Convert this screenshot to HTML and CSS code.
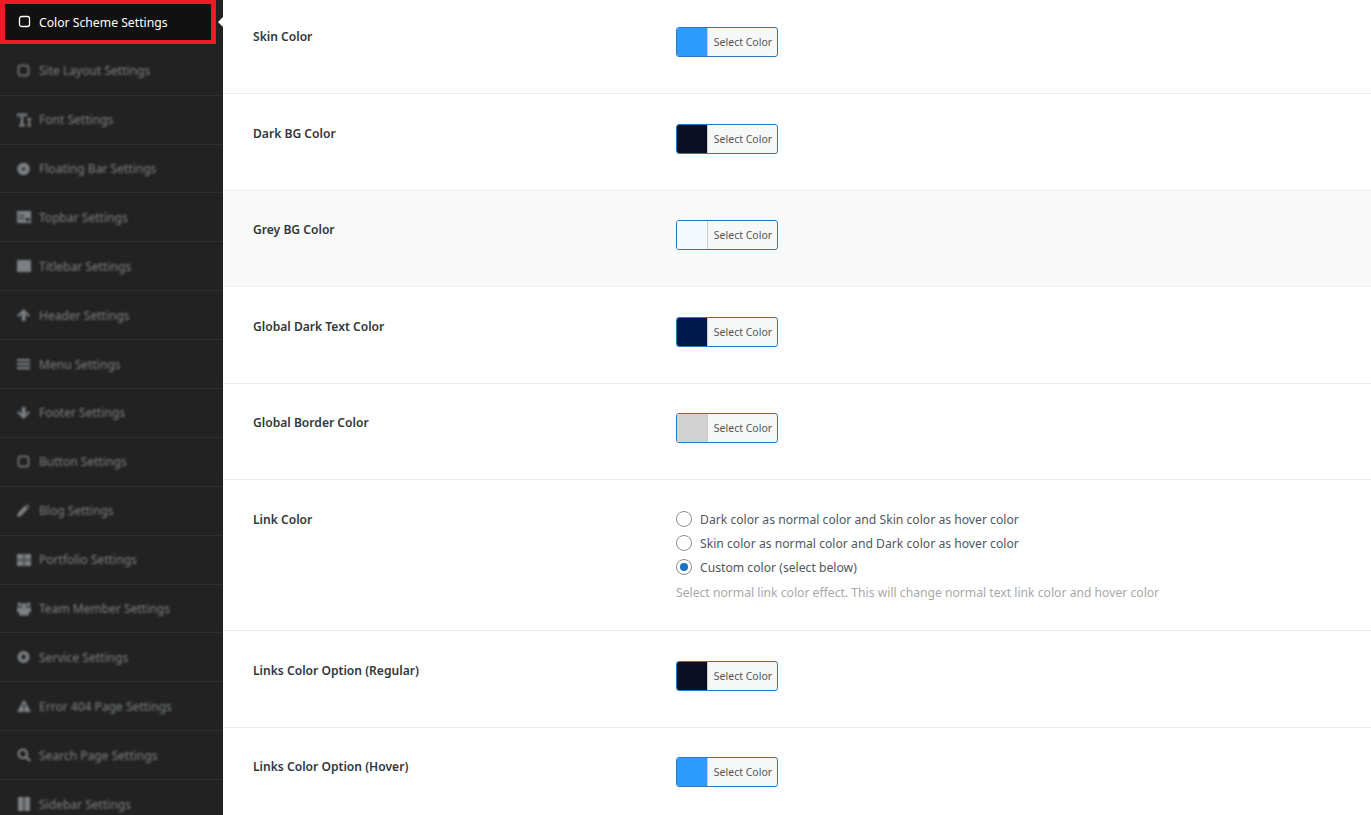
FILE: index.html
```html
<!DOCTYPE html>
<html lang="en">
<head>
<meta charset="utf-8">
<title>Color Scheme Settings</title>
<link rel="stylesheet" href="styles.css">
</head>
<body>
<div class="page">
<nav class="side">
  <a class="item active"><span class="inner"><svg class="ico" viewBox="0 0 14 14"><rect x="1.500" y="1.500" width="10" height="10" rx="2" fill="none" stroke="currentColor" stroke-width="1.300"/></svg><span>Color Scheme Settings</span></span></a>
  <a class="item"><span class="inner"><svg class="ico" viewBox="0 0 14 14"><rect x="1.500" y="1.500" width="10" height="10" rx="2" fill="none" stroke="currentColor" stroke-width="1.500"/></svg><span>Site Layout Settings</span></span></a>
  <a class="item"><span class="inner"><svg class="ico" viewBox="0 0 14 14"><path d="M0 .5h10v3.500H9L8 2.500H6.200V11.500H8v2H2v-2h1.800V2.500H2L1 4H0zM10.500 5H14v2h-.8v4.500h.8v2h-3.500v-2h.8V7h-.8z" fill="currentColor"/></svg><span>Font Settings</span></span></a>
  <a class="item"><span class="inner"><svg class="ico" viewBox="0 0 14 14"><circle cx="6.500" cy="7" r="6.200" fill="currentColor"/><circle cx="6.500" cy="7" r="1.800" fill="#333"/></svg><span>Floating Bar Settings</span></span></a>
  <a class="item"><span class="inner"><svg class="ico" viewBox="0 0 14 14"><path d="M0 1h14v12H0zM1.500 5v1h6V5zM1.500 8v1h6V8zM9 8v3h3.500V8z" fill="currentColor" fill-rule="evenodd"/></svg><span>Topbar Settings</span></span></a>
  <a class="item"><span class="inner"><svg class="ico" viewBox="0 0 14 14"><rect y="1" width="14" height="12" fill="currentColor"/></svg><span>Titlebar Settings</span></span></a>
  <a class="item"><span class="inner"><svg class="ico" viewBox="0 0 14 14"><path d="M6.500 1l6.500 6.500-1.500 1.500-3-2.800V13H4.800V6.200L1.500 9 0 7.500z" fill="currentColor"/></svg><span>Header Settings</span></span></a>
  <a class="item"><span class="inner"><svg class="ico" viewBox="0 0 14 14"><path d="M0 2h13v2.200H0zM0 6h13v2.200H0zM0 10h13v2.200H0z" fill="currentColor"/></svg><span>Menu Settings</span></span></a>
  <a class="item"><span class="inner"><svg class="ico" viewBox="0 0 14 14"><path d="M6.500 13L13 6.500 11.500 5l-3 2.800V1H4.800v6.800L1.500 5 0 6.500z" fill="currentColor"/></svg><span>Footer Settings</span></span></a>
  <a class="item"><span class="inner"><svg class="ico" viewBox="0 0 14 14"><rect x="1.500" y="1.500" width="10" height="10" rx="2" fill="none" stroke="currentColor" stroke-width="1.500"/></svg><span>Button Settings</span></span></a>
  <a class="item"><span class="inner"><svg class="ico" viewBox="0 0 14 14"><path d="M0 13l1-4 7-7.500 3 3L4 12zM9 .5l1-.5 3 3-1 1z" fill="currentColor"/></svg><span>Blog Settings</span></span></a>
  <a class="item"><span class="inner"><svg class="ico" viewBox="0 0 14 14"><path d="M0 1h6.500v5.500H0zM7.500 1H14v5.500H7.500zM0 7.500h6.500V13H0zM7.500 7.500H14V13H7.500z" fill="currentColor"/></svg><span>Portfolio Settings</span></span></a>
  <a class="item"><span class="inner"><svg class="ico" viewBox="0 0 14 14"><circle cx="2.500" cy="2.500" r="2" fill="currentColor"/><circle cx="11.500" cy="2.500" r="2" fill="currentColor"/><circle cx="7" cy="3.500" r="2.500" fill="currentColor"/><path d="M0 5.500h14v4.500h-2v3.500H2V10H0z" fill="currentColor"/></svg><span>Team Member Settings</span></span></a>
  <a class="item"><span class="inner"><svg class="ico" viewBox="0 0 14 14"><circle cx="6.500" cy="7" r="4.200" fill="none" stroke="currentColor" stroke-width="3.600"/></svg><span>Service Settings</span></span></a>
  <a class="item"><span class="inner"><svg class="ico" viewBox="0 0 14 14"><path d="M7 .5L14 13H0zM6.200 5v4h1.600V5zM6.200 10v1.500h1.600V10z" fill="currentColor" fill-rule="evenodd"/></svg><span>Error 404 Page Settings</span></span></a>
  <a class="item"><span class="inner"><svg class="ico" viewBox="0 0 14 14"><circle cx="5.800" cy="5.800" r="4.200" fill="none" stroke="currentColor" stroke-width="2.200"/><path d="M9 9l4 4" stroke="currentColor" stroke-width="2.400"/></svg><span>Search Page Settings</span></span></a>
  <a class="item"><span class="inner"><svg class="ico" viewBox="0 0 14 14"><path d="M1 0h5.500v14H1zM7.500 0H13v14H7.500z" fill="currentColor"/></svg><span>Sidebar Settings</span></span></a>
</nav>
<main class="main">
  <section class="row"><h3 class="label">Skin Color</h3><div class="field"><button class="picker"><span class="swatch skin"></span><span class="sel">Select Color</span></button></div></section>
  <section class="row"><h3 class="label">Dark BG Color</h3><div class="field"><button class="picker"><span class="swatch dark"></span><span class="sel">Select Color</span></button></div></section>
  <section class="row grey"><h3 class="label">Grey BG Color</h3><div class="field"><button class="picker"><span class="swatch pale"></span><span class="sel">Select Color</span></button></div></section>
  <section class="row"><h3 class="label">Global Dark Text Color</h3><div class="field"><button class="picker"><span class="swatch navy"></span><span class="sel">Select Color</span></button></div></section>
  <section class="row"><h3 class="label">Global Border Color</h3><div class="field"><button class="picker"><span class="swatch border"></span><span class="sel">Select Color</span></button></div></section>
  <section class="row link"><h3 class="label">Link Color</h3><div class="field options">
    <label class="radio"><span class="dot"></span>Dark color as normal color and Skin color as hover color</label>
    <label class="radio"><span class="dot"></span>Skin color as normal color and Dark color as hover color</label>
    <label class="radio"><span class="dot on"></span>Custom color (select below)</label>
    <p class="hint">Select normal link color effect. This will change normal text link color and hover color</p>
  </div></section>
  <section class="row"><h3 class="label">Links Color Option (Regular)</h3><div class="field"><button class="picker"><span class="swatch dark"></span><span class="sel">Select Color</span></button></div></section>
  <section class="row"><h3 class="label">Links Color Option (Hover)</h3><div class="field"><button class="picker"><span class="swatch skin"></span><span class="sel">Select Color</span></button></div></section>
</main>
</div>
</body>
</html>
```
FILE: styles.css
```css
* { box-sizing: border-box; }
html, body { margin: 0; height: 100%; overflow: hidden; background: #fff; }
body { font-family: "Noto Sans", "Open Sans", sans-serif; color: #32373c; }
.page { display: flex; height: 815px; overflow: hidden; }

.side { width: 223px; flex: none; background: #222; position: relative; }
.item { display: block; height: 48.900px; border-bottom: 1px solid #303030; color: #a0a5aa; font-size: 12.050px; }
.item .inner { display: flex; align-items: center; gap: 8px; height: 100%; padding-left: 17px; filter: blur(1.300px); opacity: .72; }
.ico { width: 14px; height: 14px; flex: none; }
.item.active { height: 44px; margin-bottom: 2.800px; background: #111; border: 4px solid #ed1c24; border-left-width: 5px; border-right-width: 5px; width: 216px; color: #fff; font-size: 12.200px; }
.item.active .inner { filter: none; opacity: 1; padding-left: 13px; gap: 7px; }
.side::after { content: ""; position: absolute; right: 0; top: 17px; border: 5px solid transparent; border-right-color: #fff; border-left-width: 0; }

.main { flex: 1; margin-top: -2.200px; }
.row { display: flex; height: 96.500px; padding: 30px 0 0 30px; border-bottom: 1px solid #eee; }
.row.grey { background: #f9f9f9; }
.row.link { height: 151px; }
.label { margin: -.5px 0 0; width: 423px; flex: none; font-size: 12.100px; font-weight: 600; line-height: 20px; color: #32373c; }
.picker { display: flex; align-items: stretch; width: 102px; height: 30px; margin-top: -.4px; padding: 0; border: 1px solid #2b78b8; border-radius: 3px; background: #f6f7f7; font-family: inherit; overflow: hidden; }
.swatch { width: 31px; border-right: 1px solid #ccc; }
.sel { flex: 1; padding-left: 1px; font-size: 10.500px; line-height: 28px; color: #555; text-align: center; }
.skin { background: #2e9bff; }
.dark { background: #0a0f24; }
.pale { background: #f2faff; }
.navy { background: #001a4e; }
.border { background: #d2d2d2; }

.options { margin-top: -3px; }
.radio { display: flex; align-items: center; gap: 8px; height: 24px; font-size: 12.180px; color: #50575e; }
.dot { width: 16px; height: 16px; border-radius: 50%; border: 1px solid #8c8f94; background: #fff; flex: none; position: relative; }
.dot.on::after { content: ""; position: absolute; inset: 3px; border-radius: 50%; background: #1e73be; }
.hint { margin: 4px 0 0; font-size: 12.170px; line-height: 20px; color: #a8a8a8; }
```
